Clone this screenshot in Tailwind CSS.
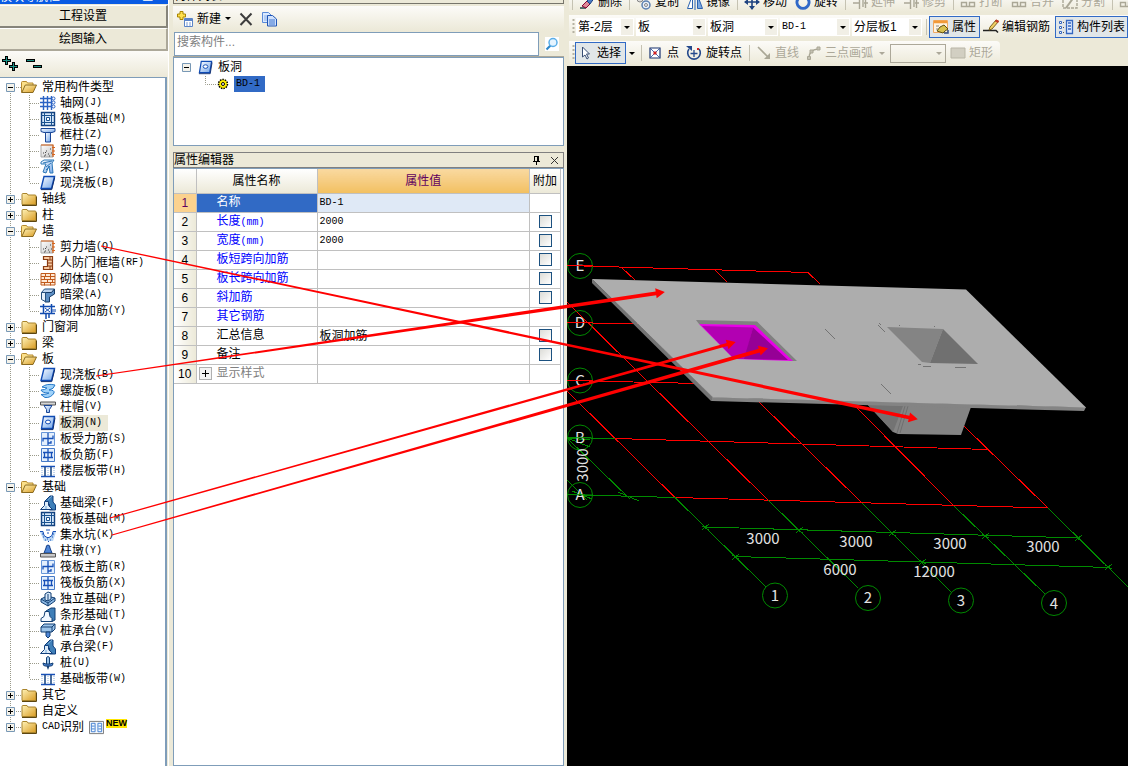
<!DOCTYPE html>
<html lang="zh-CN">

<head>
    <meta charset="UTF-8">
    <meta name="viewport" content="width=device-width, initial-scale=1.0">
    <script src="https://cdn.jsdelivr.net/npm/@tailwindcss/browser@4"></script>
    <title>属性编辑器</title>
</head>

<body class="relative h-screen overflow-hidden bg-[#ece9d8] font-['Liberation_Sans','Noto_Sans_CJK_SC',sans-serif] text-[12px] leading-4 text-black">

    <!-- Icon definitions -->
    <svg class="absolute h-0 w-0" aria-hidden="true">
        <defs>
            <linearGradient id="gold" x1="0" y1="0" x2="1" y2="1"><stop offset="0" stop-color="#fff3b8"/><stop offset="1" stop-color="#d99b22"/></linearGradient>
            <linearGradient id="blue" x1="0" y1="0" x2="1" y2="1"><stop offset="0" stop-color="#ffffff"/><stop offset="1" stop-color="#6fa4ea"/></linearGradient>
            <linearGradient id="grey" x1="0" y1="0" x2="1" y2="1"><stop offset="0" stop-color="#ffffff"/><stop offset="1" stop-color="#c4c4c4"/></linearGradient>

            <symbol id="i-folder" viewBox="0 0 16 16"><path d="M1 3.500q0-1 1-1h4l1 1.500h7q1 0 1 1v8.500h-14z" fill="url(#gold)" stroke="#a9842c"/><path d="M1 14.500h14.500v-9" fill="none" stroke="#5c4612"/></symbol>
            <symbol id="i-open" viewBox="0 0 16 16"><path d="M.5 13.500v-10q0-1 1-1h4l1 1.500h5.500v2" fill="#fbe08a" stroke="#b5892e"/><path d="M.8 13.500l3.500-7.500h11.200l-3.500 7.500z" fill="url(#gold)" stroke="#8a6a1f"/></symbol>
            <symbol id="i-grid" viewBox="0 0 16 16"><path d="M3.500 1v14M7.500 1v14M11.500 1v14M0 3.500h12M0 7.500h12M0 11.500h12" stroke="#2a62c4" fill="none" stroke-width="1.400"/><g fill="#fff" stroke="#2a62c4"><circle cx="13.500" cy="3.500" r="1.500"/><circle cx="13.500" cy="7.500" r="1.500"/><circle cx="13.500" cy="11.500" r="1.500"/></g></symbol>
            <symbol id="i-raft" viewBox="0 0 16 16"><path d="M1.500 1.500h13v13h-13z" fill="#d6e8fa" stroke="#113f7d" stroke-width="1.400"/><path d="M4.500 1v14M11.500 1v14M1 4.500h14M1 11.500h14" stroke="#1b528f" fill="none"/><path d="M6.500 6.500h3v3h-3z" fill="#fff" stroke="#1b528f"/></symbol>
            <symbol id="i-column" viewBox="0 0 16 16"><path d="M1 1.500h14v3l-3 1h-8l-3-1z" fill="url(#blue)" stroke="#1a4696"/><path d="M5.500 5.500h5v9.500h-5z" fill="url(#blue)" stroke="#1a4696"/></symbol>
            <symbol id="i-shear" viewBox="0 0 16 16"><path d="M1 2h12v12h-12z" fill="url(#grey)" stroke="#a8a8a8"/><path d="M3 10h1M5 12h1M6 8h1M8 11h1M10 6h1M4 13h1M9 13h1M11 10h1M5 9.500h1" stroke="#444"/><path d="M1 2h12v12M12 4.500h3M12 8h3M12 11.500h3" stroke="#d8641c" fill="none" stroke-width="1.200"/></symbol>
            <symbol id="i-beam" viewBox="0 0 16 16"><path d="M1 3l3-2h10l-2 3 1 10h-3l-1-7-3 7-3-1 3-8h-5z" fill="url(#blue)" stroke="#2d78b6"/><path d="M3 4l9-2M6 8l5-4M6 11l4-4" stroke="#2d78b6" fill="none"/></symbol>
            <symbol id="i-slab" viewBox="0 0 16 16"><path d="M4 1.500h10.500l-3 12h-10.500z" fill="url(#blue)" stroke="#0f4bb5" stroke-width="1.400"/><path d="M1 14.600h10.700l3-12" fill="none" stroke="#102f70"/></symbol>
            <symbol id="i-hole" viewBox="0 0 16 16"><path d="M3.500 1.500h11l-2 12h-11z" fill="url(#blue)" stroke="#0f4bb5" stroke-width="1.300"/><path d="M1 14.600h12l2-12" fill="none" stroke="#102f70"/><ellipse cx="8" cy="7" rx="2.500" ry="1.900" fill="#fff" stroke="#0f4bb5"/></symbol>
            <symbol id="i-frame" viewBox="0 0 16 16"><path d="M3.500 1.500h9v13h-9v-3h4v-7h-4z" fill="#f7c9a0" stroke="#8a3b12" stroke-width="1.200"/><path d="M8 5h4M8 8h4M8 11h4M10 2v3M10 11v3" stroke="#8a3b12"/></symbol>
            <symbol id="i-brick" viewBox="0 0 16 16"><path d="M1 2.500h14v11.500h-14z" fill="#ffe9d6" stroke="#c05a1c"/><path d="M1 5.500h14M1 8.500h14M1 11.500h14M5.500 2v3.500M10.500 5.500v3M4.500 5.500v3M7.500 8.500v3M12.500 8.500v3M4.500 11.500v3M10.500 2v3.500M10.500 11.500v3" stroke="#c05a1c" fill="none"/></symbol>
            <symbol id="i-hidden" viewBox="0 0 16 16"><path d="M1.500 5.500l3-3.500h10l-3 3.500z" fill="#bcd3ee" stroke="#26507e"/><path d="M5 5.500h6.500l3-3.500v5l-5 3v5h-4.500z" fill="#5d8fc4" stroke="#153a66"/><path d="M1.500 5.500h4v9l-4-2z" fill="#e8f1fb" stroke="#26507e"/></symbol>
            <symbol id="i-tie" viewBox="0 0 16 16"><path d="M3.500 1v10M11.500 1v10M0 3.500h15M0 10.500h15M6 10v6M9 10v5" stroke="#114bb0" stroke-width="1.500" fill="none"/><path d="M5 5l5 4M5 9l5-4M13 6v3M15 6v3" stroke="#114bb0"/></symbol>
            <symbol id="i-spiral" viewBox="0 0 16 16"><path d="M2 4q5-4 13-2-1 4-6 5 6 0 5 3-3 5-9 4.500l-4-3q6 0 8-1.500-7 0-8-3 4 0 6-2z" fill="#9fd2fa" stroke="#2478c8"/></symbol>
            <symbol id="i-cap" viewBox="0 0 16 16"><path d="M.5 3h15v3h-15z" fill="#d5d5d5" stroke="#555"/><path d="M4 6.500h8l-2.500 4v3h-3v-3z" fill="url(#blue)" stroke="#1a4696"/></symbol>
            <symbol id="i-rebar" viewBox="0 0 16 16"><path d="M1.500 1.500h13v13h-13z" fill="#e3effd" stroke="#6796d8"/><path d="M8 2v12M3 10.500v-3h10v-3M8 12h3v-2" stroke="#1750b8" stroke-width="1.300" fill="none"/></symbol>
            <symbol id="i-neg" viewBox="0 0 16 16"><path d="M1.500 1.500h13v13h-13z" fill="#e3effd" stroke="#4579c7"/><path d="M8 2v12M3 5.500h10M3 10.500h10M4.500 5v5M11.500 5v5" stroke="#1750b8" stroke-width="1.300" fill="none"/></symbol>
            <symbol id="i-strip" viewBox="0 0 16 16"><path d="M1 3.500h14M1 13.500h14" stroke="#1750b8" stroke-width="1.600"/><path d="M5 4v9M11 4v9" stroke="#113f7d" stroke-width="1.500"/><path d="M2 5v7M8 5v7M14 5v7" stroke="#88acd9" stroke-dasharray="1 1"/></symbol>
            <symbol id="i-fbeam" viewBox="0 0 16 16"><path d="M5 6l5-5h3v6l2.500 3v5h-6v-6z" fill="#3f7fb8" stroke="#113f7d"/><path d="M.5 14.500l4-4v-4h4v4l4 4z" fill="#dcebf9" stroke="#113f7d"/><path d="M6 11v3M8 5l4-4" stroke="#6ea4d4"/></symbol>
            <symbol id="i-sump" viewBox="0 0 16 16"><path d="M0 5h3l2 5h6l2-5h3l-3 9h-9z" fill="#b9d6f4"/><path d="M0 4.500h3l1 4 3 2h2l3-2 1-4h3" stroke="#1750b8" fill="none"/><path d="M2 7h1M3 10h1M5 13h1M7 12h1M10 13h1M12 10h1M13 7h1M8 14.500h1M6 3h4M7 6h2" stroke="#1750b8"/></symbol>
            <symbol id="i-pier" viewBox="0 0 16 16"><path d="M6 5q0-3 2-3t2 3l2 5h-8z" fill="#4f86d6" stroke="#143f88"/><path d="M.5 10.500h15v3.500h-15z" fill="#c9c9c9" stroke="#555"/></symbol>
            <symbol id="i-iso" viewBox="0 0 16 16"><path d="M1 8l6-3 8 2v3l-7 5-7-4z" fill="#8db9e4" stroke="#123f73"/><path d="M5 9v-6l3-2 3 1v6l-3 2z" fill="#d6e8fa" stroke="#123f73"/><path d="M8 10v-7M1 8l7 4 7-5M8 12v3" stroke="#123f73" fill="none"/></symbol>
            <symbol id="i-footing" viewBox="0 0 16 16"><path d="M6 4l5-3h4v12l-3 1.500z" fill="#3f7fb8" stroke="#123f73"/><path d="M1 14.500v-3l3-2 1-5h4l1 5 2 2v3z" fill="#f2f8ff" stroke="#123f73"/></symbol>
            <symbol id="i-pcap" viewBox="0 0 16 16"><path d="M1 4l3-3h11v5l-3 3h-11z" fill="#9cc4ea" stroke="#123f73"/><path d="M1 4h11l3-3M12 4v5" stroke="#123f73" fill="none"/><path d="M6 9h4v4l-2 2-2-2z" fill="#4f86d6" stroke="#123f73"/></symbol>
            <symbol id="i-pile" viewBox="0 0 16 16"><path d="M6.500 2.500q1.500-2 3 0v7h-3z" fill="#9cc4ea" stroke="#123f73"/><path d="M3 8q0 3 2 3h6q2 0 2-3l-3 1h-4z" fill="#4f86d6" stroke="#123f73"/><path d="M6.500 11h3l-1.500 4z" fill="#123f73"/></symbol>
            <symbol id="i-cad" viewBox="0 0 16 16"><path d="M.5 1.500h15v13h-15z" fill="#f4f8fd" stroke="#777"/><path d="M2.500 3.500h4v9h-4zM9.500 3.500h4v9h-4zM3 6.500h3M3 9.500h3M10 6.500h3M10 9.500h3" fill="none" stroke="#3f7ed0"/></symbol>

            <symbol id="i-gear" viewBox="0 0 12 12"><circle cx="6" cy="6" r="4.500" fill="#ffef00" stroke="#000" stroke-width="1.500" stroke-dasharray="1.500 1"/><circle cx="6" cy="6" r="1.500" fill="#fff" stroke="#000"/></symbol>
            <symbol id="i-new" viewBox="0 0 16 16"><path d="M3 .500h3v2.500h2.500v3h-2.500v2.500h-3v-2.500h-2.500v-3h2.500z" fill="#ffe04d" stroke="#a88500"/><path d="M7.500 7.500h8v8h-8z" fill="#fff" stroke="#5b84c8"/><path d="M8 9h7" stroke="#5b84c8" stroke-width="2"/><path d="M9 12h2M12 12h2M9 14h2M12 14h2" stroke="#7a9cd4"/></symbol>
            <symbol id="i-x" viewBox="0 0 14 14"><path d="M1.500 1.500l11 11.500M12.500 1.500l-11 11.500" stroke="#3c3c3c" stroke-width="2"/></symbol>
            <symbol id="i-copy" viewBox="0 0 16 16"><path d="M1.500 1.500h6l3 3v7h-9z" fill="#dbeaff" stroke="#5a8ad8"/><path d="M3 5h5M3 7h5M3 9h5" stroke="#8cb0e8"/><path d="M6.500 4.500h5l4 3.500v7h-9z" fill="#cfe0fb" stroke="#1f55b5"/><path d="M8 9h6M8 11h6M8 13h6" stroke="#3d74cf"/></symbol>
            <symbol id="i-search" viewBox="0 0 14 14"><path d="M0 0h14v14h-14z" fill="#fff"/><path d="M1.500 12.500l4-4" stroke="#2c86c9" stroke-width="2.200"/><circle cx="8" cy="5.500" r="4" fill="#e5f4ff" stroke="#5aaee8" stroke-width="1.500"/></symbol>
            <symbol id="i-pin" viewBox="0 0 9 9"><path d="M2.500 0v5M1 5.500h7M4.500 5v4M2 .500h5M5.500 0v5M6.500 0v5" stroke="#000" fill="none"/></symbol>
            <symbol id="i-close" viewBox="0 0 9 9"><path d="M1 1l7 7M8 1l-7 7" stroke="#333"/></symbol>

            <symbol id="i-erase" viewBox="0 0 16 16"><path d="M1 14h6" stroke="#244" stroke-width="1.500"/><path d="M3 12l5-5 3 3-4 4z" fill="#e08b98" stroke="#803"/><path d="M8 7l6-6 2 2-5 7z" fill="#4a7bc4" stroke="#1c3f80"/></symbol>
            <symbol id="i-dup" viewBox="0 0 16 16"><circle cx="4" cy="5" r="3" fill="#ddd" stroke="#888"/><circle cx="10" cy="11" r="4" fill="#e8f0fb" stroke="#5b7fb0" stroke-width="1.500"/><circle cx="10" cy="11" r="1.500" fill="none" stroke="#888"/></symbol>
            <symbol id="i-mirror" viewBox="0 0 16 16"><path d="M5.500 1v13.500h-5z" fill="#fff" stroke="#2b62b0"/><path d="M10.500 1v13.500h5z" fill="#7ca8e0" stroke="#2b62b0"/><path d="M8 0v16" stroke="#2b62b0"/></symbol>
            <symbol id="i-move" viewBox="0 0 16 16"><path d="M8 1v14M1 8h14" stroke="#1e4380" stroke-width="1.600"/><path d="M5 12l3 4 3-4zM5 4l3-4 3 4zM4 5l-4 3 4 3zM12 5l4 3-4 3z" fill="#1e4380"/></symbol>
            <symbol id="i-rotate" viewBox="0 0 16 16"><path d="M3 5a6 6 0 1 0 10 0" fill="none" stroke="#3068c8" stroke-width="3"/><path d="M9 0l5 2-4 4z" fill="#3068c8"/></symbol>
            <symbol id="i-mod" viewBox="0 0 16 16"><path d="M1 9h6M7.500 2v13M11 4v9M12 9h4M13.500 5v9" stroke="#aaa796" stroke-width="1.400" fill="none"/></symbol>
            <symbol id="i-seg" viewBox="0 0 16 16"><path d="M1.500 8.500h5v4h-5zM9.500 8.500h5v4h-5zM1 12.500h14M1 5h14" fill="none" stroke="#aaa796" stroke-width="1.400"/></symbol>
            <symbol id="i-div" viewBox="0 0 16 16"><path d="M1 3h14v11h-14z" fill="none" stroke="#aaa796" stroke-width="1.400" stroke-dasharray="3 1"/><path d="M4 14l8-11" stroke="#aaa796" stroke-width="2"/></symbol>
            <symbol id="i-prop" viewBox="0 0 16 16"><path d="M.5 1.500h14v12h-14z" fill="#fff4e2" stroke="#f0a860"/><path d="M1 3h13" stroke="#f29a38" stroke-width="2.500"/><path d="M3 7h3M3 10h2" stroke="#888"/><path d="M4 12l3-4 4-2 4 4-3 2-2 2z" fill="#d9c14f" stroke="#5f5114"/><path d="M11 14h4v-3" stroke="#2f4f86" stroke-width="1.500" fill="none"/></symbol>
            <symbol id="i-edit" viewBox="0 0 16 16"><path d="M0 11.500h13l2 2" stroke="#222" stroke-width="1.500" fill="none"/><path d="M6 11l1-3 6-7 2.500 1.500-6.500 7.500z" fill="#f0cf63" stroke="#7d6420"/><path d="M12.500 1.500l3 1.500" stroke="#c23b28" stroke-width="2.500"/></symbol>
            <symbol id="i-list" viewBox="0 0 16 16"><path d="M8.500 1.500h6v13h-6z" fill="#dfeafd" stroke="#3467c0" stroke-width="1.300"/><path d="M10 4h3M10 7h3M10 10h3" stroke="#3467c0" stroke-width="1.500"/><path d="M1.500 2.500h2v2h-2zM1.500 7.500h2v2h-2zM1.500 12.500h2v2h-2z" fill="#fff" stroke="#3467c0"/><path d="M5 3.500h2M5 8.500h2M5 13.500h2" stroke="#555" stroke-dasharray="1 1"/></symbol>
            <symbol id="i-cursor" viewBox="0 0 16 16"><path d="M5.500 2v10l2.500-2 2 4 1.500-1-2-4h3z" fill="#fff" stroke="#3a4f74"/></symbol>
            <symbol id="i-point" viewBox="0 0 12 12"><path d="M1 1h10v10h-10z" fill="#fff" stroke="#17306e" stroke-width="1.200"/><path d="M2 2l8 8M10 2l-8 8" stroke="#4a69b0"/><path d="M4.500 4.500h3v3h-3z" fill="#d21f1f"/></symbol>
            <symbol id="i-rotpt" viewBox="0 0 16 16"><path d="M3 4a6.300 6.300 0 1 0 10 0" fill="none" stroke="#24498c" stroke-width="1.600"/><path d="M0 1h6v5z" fill="#24498c"/><path d="M8 5v7M4.500 8.500h7" stroke="#24498c" stroke-width="1.300"/><path d="M11 3h2v2h-2z" fill="#c22"/></symbol>
            <symbol id="i-line" viewBox="0 0 14 14"><path d="M1 1l10 10" stroke="#aaa796" stroke-width="1.600"/><path d="M13 7v6h-6z" fill="#aaa796"/></symbol>
            <symbol id="i-arc" viewBox="0 0 14 14"><path d="M2 12q0-8 9-9" stroke="#aaa796" stroke-width="1.500" fill="none"/><path d="M.5 10.500h3v3h-3zM3 4h3v3h-3zM10 1h3v3h-3z" fill="#c4c1b2" stroke="#aaa796"/></symbol>
            <symbol id="i-rect" viewBox="0 0 16 12"><path d="M1 1h14v10h-14z" fill="#d2cfc2" stroke="#b9b6a7"/></symbol>
        </defs>
    </svg>

    <div class="flex h-full">
        <!-- Navigation sidebar -->
        <aside class="flex w-[168px] shrink-0 flex-col">
            <header class="flex h-1 shrink-0 items-end justify-between overflow-hidden bg-[#0a5be3] pr-1 text-white">
                <h2 class="leading-[14px]">模块导航栏</h2>
                <span class="leading-[14px]">⊥ ×</span>
            </header>
            <button class="mt-px h-[23px] shrink-0 border-t border-r-2 border-b-2 border-[#86847a] border-t-white bg-[#ece9d8]">工程设置</button>
            <button class="h-[23px] shrink-0 border-t border-r-2 border-b-2 border-[#aca899] border-t-white bg-[#ece9d8]">绘图输入</button>
            <div class="flex h-[26px] shrink-0 items-center gap-[7px] bg-linear-to-b from-[#fcfbf8] to-[#ece9d8] pl-0.5">
                <button aria-label="全部展开"><svg class="h-4 w-[17px]" viewBox="0 0 17 16" shape-rendering="crispEdges"><path d="M4.500 0v9M0 4.500h9M11.500 6v9M7 10.500h9" stroke="#000" stroke-width="3"/><path d="M4.500 1v7M1 4.500h7M11.500 7v7M8 10.500h7" stroke="#1b9184"/></svg></button>
                <button aria-label="全部折叠"><svg class="h-4 w-4" viewBox="0 0 16 16" shape-rendering="crispEdges"><path d="M0 4.500h9M7 10.500h9" stroke="#000" stroke-width="3"/><path d="M1 4.500h7M8 10.500h7" stroke="#1b9184"/></svg></button>
            </div>
            <nav class="mr-px flex-1 overflow-hidden border-t border-r-2 border-[#7f9db9] bg-white pt-px">
                <ul id="tree"></ul>
            </nav>
        </aside>

        <!-- Component list and property editor -->
        <section class="flex w-[399px] shrink-0 flex-col border-l border-white pr-[3px] pl-1">
            <header class="flex h-1 shrink-0 items-end justify-between overflow-hidden border-x border-b border-[#77756b] pr-1">
                <h2 class="leading-[14px]">构件列表</h2>
                <span class="leading-[14px]">⊥ ×</span>
            </header>
            <div class="mt-[2px] flex h-[25px] shrink-0 items-center bg-linear-to-b from-[#fcfbf8] to-[#ece9d8] pl-1">
                <button class="flex items-center gap-1"><svg class="h-4 w-4"><use href="#i-new"/></svg>新建<span class="border-x-[3px] border-t-[3px] border-x-transparent border-t-black"></span></button>
                <button aria-label="删除" class="ml-2"><svg class="h-[14px] w-[14px]"><use href="#i-x"/></svg></button>
                <button aria-label="复制" class="ml-2"><svg class="h-4 w-4"><use href="#i-copy"/></svg></button>
            </div>
            <div class="flex h-[26px] shrink-0 border-b border-[#aca899] pt-px pl-px">
                <input type="text" aria-label="搜索构件" placeholder="搜索构件..." class="h-6 min-w-0 flex-1 border border-[#7f9db9] bg-white px-[2px] pb-1 placeholder:text-[#808080]">
                <button aria-label="搜索" class="flex w-[25px] items-center justify-center"><svg class="h-[14px] w-[14px]"><use href="#i-search"/></svg></button>
            </div>
            <div class="h-[89px] shrink-0 border border-[#7f9db9] bg-white pl-2">
                <div class="flex h-[18px] items-center">
                    <svg class="mr-[7px] h-[9px] w-[9px]" viewBox="0 0 9 9"><path d="M.5.500h8v8h-8z" fill="#f4f2ea" stroke="#7898b5"/><path d="M2 4.500h5" stroke="#000"/></svg>
                    <svg class="mr-[5px] h-[15px] w-[15px]"><use href="#i-hole"/></svg>板洞
                </div>
                <div class="flex h-4 items-center pl-[23px]">
                    <svg class="h-4 w-3" viewBox="0 0 12 16"><path d="M.5 0v8.500H12" stroke="#9a9a8a" stroke-dasharray="1 1" fill="none"/></svg>
                    <svg class="h-3 w-3"><use href="#i-gear"/></svg>
                    <span class="ml-[5px] h-4 bg-[#316ac5] pr-[5px] pl-0.5 font-['Liberation_Mono'] text-[10px] leading-4">BD-1</span>
                </div>
            </div>

            <header class="mt-[6px] flex h-4 shrink-0 items-center border border-[#808080]">
                <h2 class="flex-1 leading-3">属性编辑器</h2>
                <button aria-label="固定"><svg class="mr-[9px] h-[9px] w-[9px]"><use href="#i-pin"/></svg></button>
                <button aria-label="关闭"><svg class="mr-1 h-[9px] w-[9px]"><use href="#i-close"/></svg></button>
            </header>
            <div class="flex-1 overflow-hidden border border-[#7f9db9] bg-white pr-[2px]">
                <table class="w-full table-fixed border-collapse text-left leading-3">
                    <colgroup><col class="w-[22px]"><col class="w-[121px]"><col><col class="w-[31px]"></colgroup>
                    <thead>
                        <tr class="h-6 bg-linear-to-b from-white to-[#ece9d8] text-center">
                            <th class="border-r border-b border-[#c0c0c0]"></th>
                            <th class="border-r border-b border-[#c0c0c0] font-normal">属性名称</th>
                            <th class="border-r border-b border-[#c0c0c0] bg-linear-to-b from-[#f9d9a0] to-[#f2c060] font-normal text-[#600060]">属性值</th>
                            <th class="border-r border-b border-[#c0c0c0] font-normal">附加</th>
                        </tr>
                    </thead>
                    <tbody id="props"></tbody>
                </table>
            </div>
        </section>

        <!-- Drawing area -->
        <main class="flex min-w-0 flex-1 flex-col overflow-hidden">
            <div class="flex h-[66px] shrink-0 flex-col overflow-hidden pl-0.5 whitespace-nowrap">
                <!-- Edit toolbar -->
                <div class="flex h-3 items-end overflow-hidden bg-linear-to-b from-[#f6f5ee] to-[#ece9d8]">
                    <div id="editBar" class="flex h-5 shrink-0 items-center"></div>
                </div>

                <!-- Component toolbar -->
                <div class="mt-[3px] flex h-6 items-center bg-linear-to-b from-[#fcfbf8] to-[#ece9d8] pl-[3px]">
                    <svg class="mr-px h-4 w-[3px] shrink-0"><path d="M1.500 0v16" stroke="#b5b2a2" stroke-width="2" stroke-dasharray="2 2"/></svg>
                    <div id="combos" class="flex shrink-0 gap-0.5"></div>
                    <span class="mr-[2px] ml-1 h-4 w-px shrink-0 bg-[#c5c2b2]"></span>
                    <button class="flex h-[22px] shrink-0 items-center gap-[3px] border border-[#316ac5] bg-[#e1e6e8] px-[3px]"><svg class="h-4 w-4"><use href="#i-prop"/></svg>属性</button>
                    <button class="ml-[3px] flex h-[22px] shrink-0 items-center gap-[3px]"><svg class="h-4 w-4"><use href="#i-edit"/></svg>编辑钢筋</button>
                    <button class="ml-[5px] flex h-[22px] shrink-0 items-center gap-[3px] border border-[#316ac5] bg-[#e1e6e8] px-[2px]"><svg class="h-4 w-4"><use href="#i-list"/></svg>构件列表</button>
                </div>

                <!-- Draw toolbar -->
                <div class="mt-[2px] flex h-6 w-[431px] items-center rounded-r bg-linear-to-b from-[#fcfbf8] to-[#ece9d8] pl-[3px]">
                    <svg class="h-4 w-[3px] shrink-0"><path d="M1.500 0v16" stroke="#b5b2a2" stroke-width="2" stroke-dasharray="2 2"/></svg>
                    <button class="flex h-[22px] w-[51px] shrink-0 items-center gap-1 border border-[#316ac5] bg-[#e1e6e8] pl-px"><svg class="h-4 w-4"><use href="#i-cursor"/></svg>选择</button>
                    <span class="ml-[3px] border-x-[3px] border-t-[3px] border-x-transparent border-t-black"></span>
                    <span class="mr-[7px] ml-[6px] h-4 w-px shrink-0 bg-[#c5c2b2]"></span>
                    <button class="flex shrink-0 items-center gap-[6px]"><svg class="h-3 w-3"><use href="#i-point"/></svg>点</button>
                    <button class="ml-[7px] flex shrink-0 items-center gap-1"><svg class="h-4 w-4"><use href="#i-rotpt"/></svg>旋转点</button>
                    <span class="mx-[7px] h-4 w-px shrink-0 bg-[#c5c2b2]"></span>
                    <button class="flex shrink-0 items-center gap-1 text-[#aca899]"><svg class="h-[14px] w-[14px]"><use href="#i-line"/></svg>直线</button>
                    <button class="ml-2 flex shrink-0 items-center gap-1 text-[#aca899]"><svg class="h-[14px] w-[14px]"><use href="#i-arc"/></svg>三点画弧</button>
                    <span class="ml-[6px] border-x-[3px] border-t-[3px] border-x-transparent border-t-[#aca899]"></span>
                    <label class="relative ml-[5px] shrink-0"><select aria-label="画弧方式" class="block h-[19px] w-14 appearance-none border border-[#aca899]"><option></option></select><span class="absolute top-2 right-1 border-x-[3px] border-t-[3px] border-x-transparent border-t-[#aca899]"></span></label>
                    <button class="ml-1 flex shrink-0 items-center gap-[3px] text-[#aca899]"><svg class="h-3 w-4"><use href="#i-rect"/></svg>矩形</button>
                </div>
            </div>

            <!-- Model view -->
            <div class="min-h-0 flex-1 bg-black">
                <svg class="h-full w-full" viewBox="567 66 561 700" preserveAspectRatio="xMinYMin meet" fill="none">
                    <!-- axis grid -->
                    <g stroke="#f00" shape-rendering="crispEdges">
                        <path d="M567 265.500L808 272.500L820 284M621 267L635 280M715 270L727 282M567 322.500L640 324M567 380.500L700 383.500"/>
                        <path d="M615 438.500L988 449.500M675 497.500L1048 508"/>
                        <path d="M567 391L675 497.500M567 302L708 441L768 500M759 402L862 503M857 408L954 506M964 426L1048 508"/>
                    </g>
                    <g stroke="#008a00" shape-rendering="crispEdges">
                        <path d="M567 437.500L615 438.500M567 494.500L675 497.500M675 497.500L766 587M768 500L858 588M862 503L951 592M954 506L1045 594M1048 508L1128 587"/>
                        <path d="M705 527L1080 538M734 556.500L1110 567.500M567 438L630 499M618 492L639 501M567 480L587 500M567 438L590 440M567 438L590 447M572 491L592 499"/>
                        <path d="M702 530L709 524M796 533L803 527M889 536L896 530M982 539L989 533M1075 541L1082 535M732 560L739 554M919 565L926 559M1105 570L1112 564"/>
                        <path d="M702 526L709 530M796 529L803 533M889 532L896 536M982 534L989 538M1075 537L1082 541M732 555L739 559M919 560L926 564M1105 565L1112 569"/>
                    </g>
                    <g stroke="#008a00">
                        <circle cx="580" cy="266" r="12.500"/><circle cx="580" cy="323" r="12.500"/><circle cx="580" cy="380.500" r="12.500"/><circle cx="580" cy="437.500" r="12.500"/><circle cx="580" cy="495" r="12.500"/>
                        <circle cx="775" cy="595.500" r="12.500"/><circle cx="868" cy="598" r="12.500"/><circle cx="961" cy="600.500" r="12.500"/><circle cx="1054" cy="603" r="12.500"/>
                    </g>
                    <g fill="#e2e2e2" font-size="15" text-anchor="middle" class="font-['Noto_Sans_CJK_SC',sans-serif]">
                        <text x="580" y="271">E</text><text x="580" y="328">D</text><text x="580" y="386">C</text><text x="580" y="443">B</text><text x="580" y="500">A</text>
                        <text x="588" y="465" transform="rotate(-90 588 465)">3000</text>
                        <text x="763" y="544">3000</text><text x="856" y="547">3000</text><text x="950" y="549">3000</text><text x="1043" y="552">3000</text>
                        <text x="840" y="575">6000</text><text x="934" y="577">12000</text>
                        <text x="775" y="601">1</text><text x="868" y="603">2</text><text x="961" y="606">3</text><text x="1054" y="609">4</text>
                    </g>
                    <path d="M567 265.500H593M567 322.500H593M567 380.500H593" stroke="#f00"/>
                    <path d="M567 437.500L593 438M567 494.500L593 495" stroke="#008a00"/>
                    <!-- sump below the slab -->
                    <path d="M867 404L971 407L961 435L898 434L893 432z" fill="#848484"/>
                    <path d="M867 404L903 406L893 432z" fill="#737373"/>
                    <path d="M905 406L897 433M908 406L900 433" stroke="#6f6f6f"/>
                    <!-- slab -->
                    <path d="M592 279L713 397V401H711L592 283z" fill="#737373"/>
                    <path d="M712 397L1086 407L1084 411L712 401z" fill="#848484"/>
                    <path d="M592 279L966 289.500L1086 407.500L713 397.500z" fill="#adadad"/>
                    <!-- selected opening -->
                    <path d="M696 320L757 321.500L797 361H790L754 326L699 324z" fill="#808080"/>
                    <path d="M699 324L755 325L793 361L734 359z" fill="#e800e8"/>
                    <path d="M702 326L753 327.500L745 359L734 359z" fill="#b200b2"/>
                    <path d="M753 327.500L788 360L744 359z" fill="#960096"/>
                    <!-- second opening -->
                    <path d="M887 327L943 329L930 363L922 362z" fill="#848484"/>
                    <path d="M943 329L978 364L930 363z" fill="#707070"/>
                    <path d="M825 329L835 339M878 325L885 332M879 323L881 325M899 325.500H900M934 326.500H935M918 364.500H921M923 366.500H931M955 367.500H966M881 384L891 394" stroke="#737373"/>
                </svg>
            </div>
        </main>
    </div>

    <!-- Callout arrows -->
    <svg class="pointer-events-none absolute inset-0 h-full w-full" fill="#f00" aria-hidden="true">
        <path transform="translate(101 246) rotate(11.980)" d="M0-.6L826-1.800V-5L835 0L826 5V1.800L0 .6z"/>
        <path transform="translate(96 376) rotate(-8.400)" d="M0-.6L566-1.900V-5L575 0L566 5V1.900L0 .6z"/>
        <path transform="translate(110 518) rotate(-15.700)" d="M0-.6L641-1.500V-5L650 0L641 5V1.500L0 .6z"/>
        <path transform="translate(112 535) rotate(-15.900)" d="M0-.6L673-1.900V-5L682 0L673 5V1.900L0 .6z"/>
    </svg>

    <script>
        // Navigation tree: [name, open, children], child: [name, key, icon]
        const groups = [
            ['常用构件类型', true, [['轴网', 'J', 'grid'], ['筏板基础', 'M', 'raft'], ['框柱', 'Z', 'column'], ['剪力墙', 'Q', 'shear'], ['梁', 'L', 'beam'], ['现浇板', 'B', 'slab']]],
            ['轴线', false, []],
            ['柱', false, []],
            ['墙', true, [['剪力墙', 'Q', 'shear'], ['人防门框墙', 'RF', 'frame'], ['砌体墙', 'Q', 'brick'], ['暗梁', 'A', 'hidden'], ['砌体加筋', 'Y', 'tie']]],
            ['门窗洞', false, []],
            ['梁', false, []],
            ['板', true, [['现浇板', 'B', 'slab'], ['螺旋板', 'B', 'spiral'], ['柱帽', 'V', 'cap'], ['板洞', 'N', 'hole'], ['板受力筋', 'S', 'rebar'], ['板负筋', 'F', 'neg'], ['楼层板带', 'H', 'strip']]],
            ['基础', true, [['基础梁', 'F', 'fbeam'], ['筏板基础', 'M', 'raft'], ['集水坑', 'K', 'sump'], ['柱墩', 'Y', 'pier'], ['筏板主筋', 'R', 'rebar'], ['筏板负筋', 'X', 'neg'], ['独立基础', 'P', 'iso'], ['条形基础', 'T', 'footing'], ['桩承台', 'V', 'pcap'], ['承台梁', 'F', 'fbeam'], ['桩', 'U', 'pile'], ['基础板带', 'W', 'strip']]],
            ['其它', false, []],
            ['自定义', false, []],
            ['CAD识别', false, []],
        ];

        document.getElementById('tree').innerHTML = groups.map(([name, open, items], g) => {
            const last = g === groups.length - 1;
            const line = (g === 0 ? 'M10.5 8' : 'M10.5 0') + (last ? 'V8' : 'V16');
            const label = name === 'CAD识别'
                ? `<span class="font-['Liberation_Mono'] text-[10px]">CAD</span>识别<svg class="ml-[5px] h-[15px] w-[15px]"><use href="#i-cad"/></svg><span class="mb-2 ml-0.5 bg-[#ffe600] text-[9px] leading-[9px] font-bold">NEW</span>`
                : name;
            return `
                <li>
                    <div class="flex h-4 items-center whitespace-nowrap">
                        <svg class="h-4 w-[21px] shrink-0"><path d="${line}M16 8.500H21" stroke="#9a9a8a" stroke-dasharray="1 1"/><path d="M6.500 4.500h8v8h-8z" fill="#f4f2ea" stroke="#7898b5"/><path d="M8 8.500h5${open ? '' : 'M10.500 6v5'}" stroke="#000"/></svg>
                        <svg class="mr-[5px] h-4 w-4 shrink-0"><use href="${open ? '#i-open' : '#i-folder'}"/></svg>${label}
                    </div>
                    <ul>${items.map(([text, key, icon], i) => `
                        <li class="flex h-4 items-center whitespace-nowrap">
                            <svg class="h-4 w-10 shrink-0"><path d="M10.500 0V16M29.500 0V${i === items.length - 1 ? 8 : 16}M30 8.500H40" stroke="#9a9a8a" stroke-dasharray="1 1"/></svg>
                            <svg class="h-4 w-4 shrink-0"><use href="#i-${icon}"/></svg>
                            <a href="#" class="ml-[3px] flex h-4 items-center px-px ${text === '板洞' ? 'bg-[#ece9d8] pr-[6px]' : ''}">${text}<span class="font-['Liberation_Mono'] text-[10px]">(${key})</span></a>
                        </li>`).join('')}
                    </ul>
                </li>`;
        }).join('');

        // Property rows: [name, unit, value, has checkbox]
        const props = [
            ['名称', '', 'BD-1', false], ['长度', '(mm)', '2000', true], ['宽度', '(mm)', '2000', true],
            ['板短跨向加筋', '', '', true], ['板长跨向加筋', '', '', true], ['斜加筋', '', '', true], ['其它钢筋', '', '', false],
            ['汇总信息', '', '板洞加筋', true], ['备注', '', '', true], ['显示样式', '', '', false],
        ];

        document.getElementById('props').innerHTML = props.map(([name, unit, value, check], i) => {
            const color = i === 0 ? 'bg-[#316ac5] text-white' : i < 7 ? 'text-[#0000ff]' : i < 9 ? 'text-black' : 'text-[#808080]';
            const expand = i === 9 ? '<button aria-label="展开" class="mr-[5px] ml-[2px] inline-flex h-[13px] w-[13px] items-center justify-center border border-[#b0b0b0] bg-[#f4f4f4] align-middle text-black"><svg class="h-[7px] w-[7px]"><path d="M0 3.500h7M3.500 0v7" stroke="#000"/></svg></button>' : '';
            return `
                <tr class="h-[19px]">
                    <td class="border-r border-b border-[#c0c0c0] text-center ${i === 0 ? 'bg-[#fbd28e] text-[#600060]' : 'bg-linear-to-r from-white to-[#ece9d8]'}">${i + 1}</td>
                    <td class="border-r border-b border-[#c0c0c0] ${i === 9 ? '' : 'pl-5'} ${color}">${expand}${name}<span class="font-['Liberation_Mono'] text-[10px]">${unit}</span></td>
                    <td class="border-r border-b border-[#c0c0c0] pl-[2px] ${i === 0 ? 'bg-[#dfe9f6]' : ''} ${i < 3 ? "font-['Liberation_Mono'] text-[10px]" : ''}">${value}</td>
                    <td class="border-r border-b border-[#c0c0c0] text-center">${check ? `<input type="checkbox" aria-label="附加 ${name}" class="mx-auto block h-[13px] w-[13px] appearance-none border border-[#1c5180] bg-linear-to-br from-[#dcdcd7] to-white">` : ''}</td>
                </tr>`;
        }).join('');

        // Drop-downs above the model view
        document.getElementById('combos').innerHTML = ['第-2层', '板', '板洞', 'BD-1', '分层板1'].map((text, i) => `
            <label class="relative ${i === 0 ? 'w-[58px]' : 'w-[70px]'}">
                <select aria-label="${text}" class="block h-[18px] w-full appearance-none bg-white pl-0.5 ${i === 3 ? "font-['Liberation_Mono'] text-[10px]" : ''}"><option>${text}</option></select>
                <span class="pointer-events-none absolute top-px right-px flex h-4 w-3 items-center justify-center bg-[#f1efe6]"><span class="border-x-[3px] border-t-[3px] border-x-transparent border-t-black"></span></span>
            </label>`).join('');

        // Edit commands, '|' is a separator
        const edit = ['|', ['删除', 'erase'], '|', ['复制', 'dup'], ['镜像', 'mirror'], '|', ['移动', 'move'], ['旋转', 'rotate'], '|',
            ['延伸', 'mod'], ['修剪', 'mod'], '|', ['打断', 'seg'], ['合并', 'seg'], ['分割', 'div'], '|', ['对齐', 'seg']];
        document.getElementById('editBar').innerHTML = edit.map((item, i) => item === '|'
            ? '<span class="mr-[2px] ml-[3px] h-4 w-px bg-[#c5c2b2]"></span>'
            : `<button class="flex w-[51px] shrink-0 items-center gap-[3px] pl-1 ${i > 8 ? 'text-[#aca899]' : ''}"><svg class="h-4 w-4"><use href="#i-${item[1]}"/></svg>${item[0]}</button>`).join('');
    </script>
</body>

</html>
